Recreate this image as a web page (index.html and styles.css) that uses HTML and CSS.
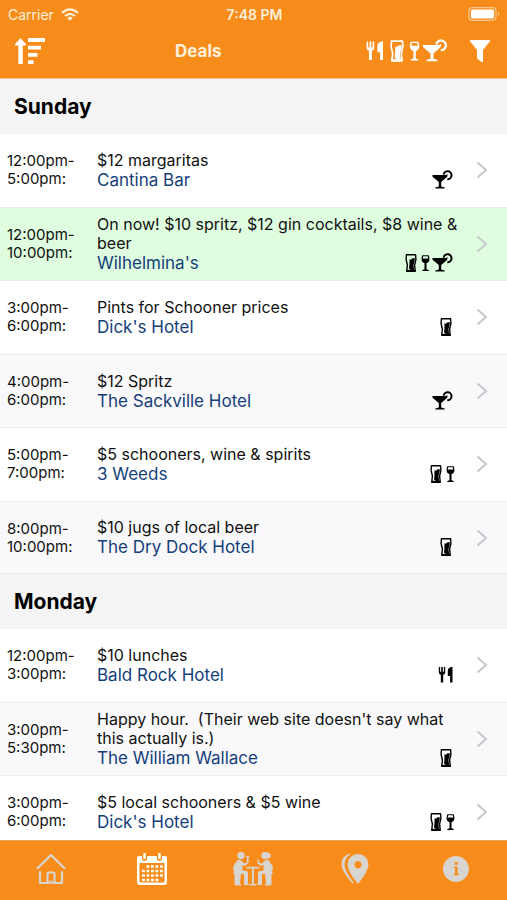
FILE: index.html
```html
<!DOCTYPE html>
<html lang="en">
<head>
<meta charset="utf-8">
<meta name="viewport" content="width=device-width, initial-scale=1">
<title>Deals</title>
<link rel="stylesheet" href="styles.css">
</head>
<body>
<svg class="sprite" aria-hidden="true">
  <symbol id="food" viewBox="0 0 20 20">
    <path d="M3.800 2h1.300v4.800h1.100V2h1.600v4.800h1.100V2h1.300v5.500q0 1.800-2 2.300V17.500H5.800V9.800Q3.800 9.300 3.800 7.500z"/>
    <path d="M17.500 1.800V17.500h-2.400V11h-2.300V6q0-3.600 4.700-4.200z"/>
  </symbol>
  <symbol id="beer" viewBox="0 0 18 20">
    <path d="M4.400 1.800h9.200l.3 4.700-1.300 5.500.7 6.300H4.700l.7-6.300-1.300-5.500z" fill="none" stroke="currentColor" stroke-width="1.400" stroke-linejoin="round"/>
    <path d="M7.500 6.200l1.500.5 1-1.200 2.700-.5v2.500L11.500 12l.6 5H8.800L7 15.500l.4-3.500z"/>
    <path d="M5 16.800h8v1.700H5z"/>
  </symbol>
  <symbol id="wine" viewBox="0 0 10 20">
    <path d="M2.300 2.200h6.400q2.200 6.300-2.200 8v6.100l2.200.7v1H2.300v-1l2.200-.7V10.200Q.1 8.500 2.300 2.200z M3.300 3.300L2.700 5.600h5.600l-.6-2.300z" fill-rule="evenodd"/>
  </symbol>
  <symbol id="cocktail" viewBox="0 0 25 20">
    <path d="M2.500 5h14.800v1.700L11.200 12v4.500l3.500.9v1.100H5.300v-1.100l3.500-.9V12L2.500 6.700z"/>
    <path d="M13.600 4.600a4 4 0 1 1 3.700 4.700" fill="none" stroke="currentColor" stroke-width="2"/>
    <path d="M14.500 6l3-1.300" stroke="currentColor" stroke-width="1"/>
  </symbol>
</svg>
<div class="app">
  <header class="top">
    <div class="status">
      <span class="carrier">Carrier
        <svg width="18" height="13" viewBox="0 0 18 13" aria-hidden="true"><g fill="none" stroke="currentColor" stroke-width="2.200"><path d="M1 4.800q8-7 16 0"/><path d="M4 8q5-4.400 10 0"/></g><path d="M6.200 10q2.800-2.300 5.600 0L9 12.800z"/></svg>
      </span>
      <span class="clock">7:48 PM</span>
      <svg class="battery" width="33" height="14" viewBox="0 0 33 14" aria-hidden="true"><rect x="1" y=".7" width="27" height="12.600" rx="3.500" fill="none" stroke="#fbc88c" stroke-width="1.200"/><rect x="3" y="2.600" width="23" height="8.800" rx="1.500"/><path d="M30 4.800q2.500 2 0 4.400z" fill="#fbc88c"/></svg>
    </div>
    <div class="bar">
      <button class="tool" type="button" aria-label="Sort"><svg width="32" height="28" viewBox="0 0 32 28"><path d="M6.500 1L12 7.200v1.300H8.700V27H4.300V8.500H1V7.200z"/><path d="M14 1h17v4H14zM14 8.700h13v3.800H14zM14 16h9.500v3.800H14zM14 23.300h5.500V27H14z"/></svg></button>
      <h1 class="title">Deals</h1>
      <button class="tool kinds" type="button" aria-label="Deal types"><svg class="w-food"><use href="#food"/></svg><svg class="w-beer"><use href="#beer"/></svg><svg class="w-wine"><use href="#wine"/></svg><svg class="w-cocktail"><use href="#cocktail"/></svg></button>
      <button class="tool" type="button" aria-label="Filter"><svg width="22" height="24" viewBox="0 0 22 24"><path d="M1.500 1h19q1 0 .7 1L14 11v11.500q0 1-1 .7L8.500 20q-.5-.4-.5-1V11L.8 2Q.5 1 1.500 1z"/></svg></button>
    </div>
  </header>

  <main class="deals">
    <section>
      <h2 class="day">Sunday</h2>
      <ul class="list">
        <li><a class="deal" href="#cantina"><span class="time">12:00pm-<br>5:00pm:</span><span class="info"><span class="offer">$12 margaritas</span><span class="place"><span class="venue">Cantina Bar</span><span class="icons"><svg class="w-cocktail"><use href="#cocktail"/></svg></span></span></span><svg class="chevron" viewBox="0 0 12 18"><path d="M1.500 1.500L10 9l-8.500 7.500"/></svg></a></li>
        <li><a class="deal now" href="#wilhelminas"><span class="time">12:00pm-<br>10:00pm:</span><span class="info"><span class="offer">On now! $10 spritz, $12 gin cocktails, $8 wine &amp; beer</span><span class="place"><span class="venue">Wilhelmina's</span><span class="icons"><svg class="w-beer"><use href="#beer"/></svg><svg class="w-wine"><use href="#wine"/></svg><svg class="w-cocktail"><use href="#cocktail"/></svg></span></span></span><svg class="chevron" viewBox="0 0 12 18"><path d="M1.500 1.500L10 9l-8.500 7.500"/></svg></a></li>
        <li><a class="deal" href="#dicks-sunday"><span class="time">3:00pm-<br>6:00pm:</span><span class="info"><span class="offer">Pints for Schooner prices</span><span class="place"><span class="venue">Dick's Hotel</span><span class="icons"><svg class="w-beer"><use href="#beer"/></svg></span></span></span><svg class="chevron" viewBox="0 0 12 18"><path d="M1.500 1.500L10 9l-8.500 7.500"/></svg></a></li>
        <li><a class="deal" href="#sackville"><span class="time">4:00pm-<br>6:00pm:</span><span class="info"><span class="offer">$12 Spritz</span><span class="place"><span class="venue">The Sackville Hotel</span><span class="icons"><svg class="w-cocktail"><use href="#cocktail"/></svg></span></span></span><svg class="chevron" viewBox="0 0 12 18"><path d="M1.500 1.500L10 9l-8.500 7.500"/></svg></a></li>
        <li><a class="deal" href="#weeds"><span class="time">5:00pm-<br>7:00pm:</span><span class="info"><span class="offer">$5 schooners, wine &amp; spirits</span><span class="place"><span class="venue">3 Weeds</span><span class="icons"><svg class="w-beer"><use href="#beer"/></svg><svg class="w-wine"><use href="#wine"/></svg></span></span></span><svg class="chevron" viewBox="0 0 12 18"><path d="M1.500 1.500L10 9l-8.500 7.500"/></svg></a></li>
        <li><a class="deal" href="#dry-dock"><span class="time">8:00pm-<br>10:00pm:</span><span class="info"><span class="offer">$10 jugs of local beer</span><span class="place"><span class="venue">The Dry Dock Hotel</span><span class="icons"><svg class="w-beer"><use href="#beer"/></svg></span></span></span><svg class="chevron" viewBox="0 0 12 18"><path d="M1.500 1.500L10 9l-8.500 7.500"/></svg></a></li>
      </ul>
    </section>
    <section>
      <h2 class="day">Monday</h2>
      <ul class="list">
        <li><a class="deal" href="#bald-rock"><span class="time">12:00pm-<br>3:00pm:</span><span class="info"><span class="offer">$10 lunches</span><span class="place"><span class="venue">Bald Rock Hotel</span><span class="icons"><svg class="w-food"><use href="#food"/></svg></span></span></span><svg class="chevron" viewBox="0 0 12 18"><path d="M1.500 1.500L10 9l-8.500 7.500"/></svg></a></li>
        <li><a class="deal" href="#wallace"><span class="time">3:00pm-<br>5:30pm:</span><span class="info"><span class="offer">Happy hour.&nbsp; (Their web site doesn't say what this actually is.)</span><span class="place"><span class="venue">The William Wallace</span><span class="icons"><svg class="w-beer"><use href="#beer"/></svg></span></span></span><svg class="chevron" viewBox="0 0 12 18"><path d="M1.500 1.500L10 9l-8.500 7.500"/></svg></a></li>
        <li><a class="deal" href="#dicks-monday"><span class="time">3:00pm-<br>6:00pm:</span><span class="info"><span class="offer">$5 local schooners &amp; $5 wine</span><span class="place"><span class="venue">Dick's Hotel</span><span class="icons"><svg class="w-beer"><use href="#beer"/></svg><svg class="w-wine"><use href="#wine"/></svg></span></span></span><svg class="chevron" viewBox="0 0 12 18"><path d="M1.500 1.500L10 9l-8.500 7.500"/></svg></a></li>
      </ul>
    </section>
  </main>

  <nav class="tabs">
    <a href="#home" aria-label="Home"><svg width="30" height="32" viewBox="0 0 30 32"><g fill="none" stroke="currentColor" stroke-width="2.200" stroke-linecap="round" stroke-linejoin="round"><path d="M1.500 15.200L15 2l13.500 13.200"/><path d="M4 19v11h7.500V21q0-1.500 1.500-1.500h4q1.500 0 1.500 1.500v9H26V19"/><path d="M8.500 30h13M14 28.500h2" stroke-width="1.600"/></g></svg></a>
    <a class="current" href="#deals" aria-label="Deals" aria-current="page"><svg width="32" height="34" viewBox="0 0 32 34"><path fill-rule="evenodd" d="M3 4h3v3q0 2 2.500 2T11 7V4h10v3q0 2 2.500 2T26 7V4h3q2 0 2 2v24q0 3-3 3H4q-3 0-3-3V6q0-2 2-2zM3.500 11v18q0 1.500 1.500 1.500h22q1.500 0 1.500-1.500V11z"/><path d="M7.300 1h2.400v6H7.300zM22.300 1h2.400v6h-2.400z"/><path d="M10.500 14.500h17M6 19h21M6 23.500h21M6 28h17" stroke="currentColor" stroke-width="2.600" stroke-dasharray="2.800 1.700"/></svg></a>
    <a href="#meet" aria-label="Meet up"><svg width="42" height="36" viewBox="0 0 42 36"><circle cx="9" cy="4.600" r="3.700"/><path d="M5.500 9Q8 8 10 10.500l2.500 2 2.500-1V7l-1-2h3.500l-1 2.500v4.500L13 15l-2.500-1v5.500l4 .5q1.500.3 1.500 2v10l1.500 2H12v-11l-3 0-1 9 1.500 2.500H4V23H1.500v-2.500h1Q.5 19 1.500 15z"/><path d="M2.500 23H4v11H2.500z"/><path d="M14.500 15.800h13v1.700h-5.600V33h2v1.500h-6V33h2V17.500h-5.400z"/><circle cx="33" cy="4.600" r="3.700"/><path d="M35 1l4 2.500-1.500 4.500-2.500-2zM36.500 9Q34 8 32 10.500l-2.500 2-2.500-1V9l-1.500-1.500v5L29 15l2.500-1v5.500l-4 .5q-1.500.3-1.500 2v10l-1.500 2H30v-11h3l1 9-1.500 2.500H38V23h2.500v-2.500h-1Q41.500 19 40.500 15z"/><path d="M38 23h1.500v11H38z"/></svg></a>
    <a href="#map" aria-label="Map"><svg width="30" height="32" viewBox="0 0 30 32"><path fill-rule="evenodd" d="M18 1a10.500 10.500 0 0 1 10.500 10.500Q28.500 18 18 31 7.500 18 7.500 11.500A10.500 10.500 0 0 1 18 1zm0 7a3.700 3.700 0 1 0 .1 0z"/><path d="M11 1Q4.500 4.500 4.500 11.500 4.500 18 14 30q-1 .6-2 0Q1.500 18 1.500 11.500 1.500 3 9 1q1-.3 2 0z"/></svg></a>
    <a href="#about" aria-label="About"><svg width="28" height="28" viewBox="0 0 28 28"><path fill-rule="evenodd" d="M14 1a13 13 0 1 1-.1 0zm-1.200 6v2.700h2.800V7zM11.800 11.500v1.300h1.200V19h-1.200v1.300h5V19h-1.200v-7.500z"/></svg></a>
  </nav>
</div>
</body>
</html>
```

FILE: styles.css
```css
* { box-sizing: border-box; }
body {
  margin: 0;
  font-family: Inter, "Liberation Sans", sans-serif;
  color: #111;
  background: #fff;
}
svg { display: block; fill: currentColor; flex: none; }
.sprite { position: absolute; width: 0; height: 0; }
.app { display: flex; flex-direction: column; height: 100vh; }

.top {
  flex: none;
  color: #fff;
  background: #f78c1a;
  border-bottom: 1px solid #f6c28b;
}
.status {
  display: grid;
  grid-template-columns: 1fr auto 1fr;
  align-items: center;
  height: 28px;
  padding: 0 6px 0 8px;
  font-size: 14px;
  color: #fff0dc;
}
.carrier { display: flex; align-items: center; gap: 7px; }
.clock { font-weight: 600; }
.battery { justify-self: end; color: #fff; }
.bar { display: flex; align-items: center; height: 50px; padding: 0 16px 4px 14px; }
.tool { padding: 0; border: 0; background: none; color: #fff; }
.title {
  flex: 1;
  margin: 0;
  padding-left: 129px;
  font-size: 17px;
  font-weight: 700;
  color: #fff0dc;
}
.kinds { display: flex; margin-right: 19px; }

.w-food { width: 20px; height: 20px; }
.w-beer { width: 18px; height: 20px; }
.w-wine { width: 10px; height: 20px; }
.w-cocktail { width: 25px; height: 20px; }
.kinds svg { height: 24px; }
.kinds .w-food { width: 24px; }
.kinds .w-beer { width: 22px; }
.kinds .w-wine { width: 12px; }
.kinds .w-cocktail { width: 30px; }

.deals { flex: 1; min-height: 0; overflow: hidden; }
.day {
  margin: 0;
  padding: 0 14px;
  font-size: 21px;
  line-height: 55px;
  font-weight: 700;
  color: #000;
  background: #f4f4f4;
}
.list { margin: 0; padding: 0; list-style: none; }
.deal {
  display: flex;
  align-items: center;
  min-height: 73px;
  padding: 0 19px 1px 7px;
  color: inherit;
  text-decoration: none;
}
.list li:nth-child(even) .deal {
  min-height: 74px;
  padding-bottom: 0;
  background: #f9f9fb;
  border-top: 1px solid #ebebee;
  border-bottom: 1px solid #ebebee;
}
.list li:last-child .deal { min-height: 73px; }
.list li .deal.now { background: #dffddf; }
.time { flex: none; width: 90px; font-size: 15px; line-height: 18px; }
.info { flex: 1; min-width: 0; }
.offer { display: block; font-size: 16px; line-height: 19px; }
.place { display: flex; align-items: flex-end; justify-content: space-between; }
.venue { font-size: 17px; line-height: 20px; color: #153e7a; }
.icons { display: flex; margin-right: 3px; color: #000; }
.chevron {
  width: 12px;
  height: 18px;
  margin-left: 18px;
  fill: none;
  stroke: #c8c8cc;
  stroke-width: 2;
}

.tabs {
  flex: none;
  display: grid;
  grid-template-columns: repeat(5, 1fr);
  height: 60px;
  background: #f78c1a;
  border-top: 1px solid #e8a45c;
}
.tabs a { display: grid; place-items: center; padding-bottom: 3px; color: #d8d4d0; }
.tabs .current { color: #fff; }
```
